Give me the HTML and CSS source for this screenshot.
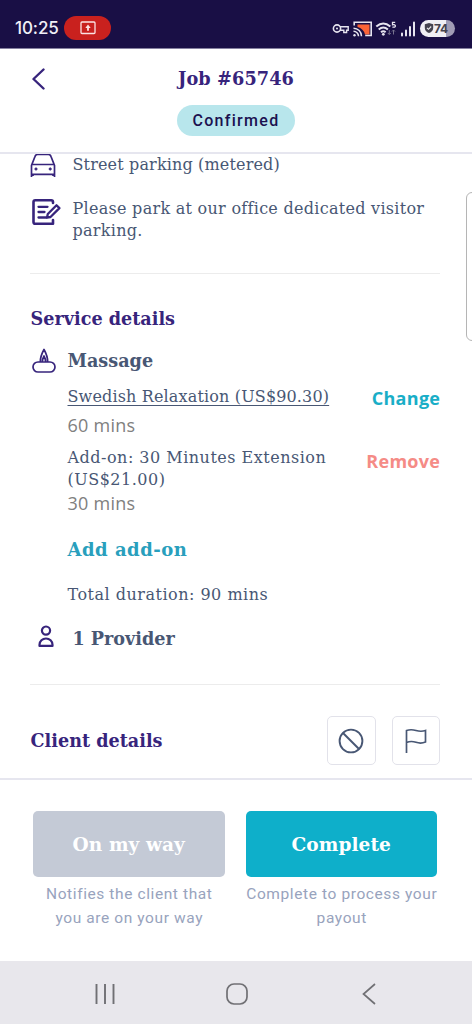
FILE: index.html
```html
<!DOCTYPE html>
<html lang="en">
<head>
<meta charset="utf-8">
<title>Job #65746</title>
<link rel="stylesheet" href="styles.css">
</head>
<body>
<div class="screen">
  <div class="status">
    <span class="clock">10:25</span>
    <span class="record">
      <svg width="16" height="14" viewBox="0 0 16 14" fill="none" stroke="#fbe3e3" stroke-width="1.3"><rect x="1" y="1" width="14" height="11.5" rx="1"/><path d="M8 9.8V6" stroke-width="1.800"/><path d="M8 3.6 10.7 6.9H5.3z" fill="#fbe3e3" stroke="none"/></svg>
    </span>
    <svg class="indicators" width="88" height="24" viewBox="0 0 88 24" fill="none" stroke="#e6e4ef">
      <circle cx="5" cy="12.5" r="3.6" stroke-width="1.6"/><circle cx="5" cy="12.5" r="1" fill="#e6e4ef" stroke="none"/>
      <path d="M8 10.8h8.2v3.4h-1.6v2.3h-2.8v-2.3H8" stroke-width="1.4"/>
      <path d="M25.5 8.500h12v10h-4.500q-1.500-6-7.500-7.500z" fill="#fa6337" stroke="none"/>
      <path d="M22.2 9.500V6.300h17v13.200h-6" stroke-width="1.6"/>
      <path d="M21.5 12.2a8 8 0 0 1 8 8M21.5 15.2a5 5 0 0 1 5 5" stroke-width="1.5"/><circle cx="22.5" cy="19.2" r="1.2" fill="#e6e4ef" stroke="none"/>
      <path d="M44.300 10.500q7-6 14 0M46.700 13.500q4.600-4 9.200 0M49 16.300q2.300-2 4.600 0" stroke-width="2"/><circle cx="51.300" cy="18.300" r="1.400" fill="#e6e4ef" stroke="none"/>
      <path d="M63.200 6.300h-2.700v2.500q2.900-.6 2.900 1.200 0 1.600-3 1.100" stroke-width="1.300"/>
      <path d="M57.300 14v4.500m-1.500-1.500 1.500 1.500 1.500-1.500M61.500 18.500V14m-1.500 1.500L61.500 14l1.500 1.500" stroke="#77738f" stroke-width="1"/>
      <path d="M70 17.500v2M74 14.500v5M78 11v8.500M82 6.500v13" stroke-width="2" stroke-linecap="round"/>
    </svg>
    <span class="battery">
      <svg width="10" height="10" viewBox="0 0 10 10"><path d="M5 0 9.200 1.300V5Q9 8.500 5 10 1 8.500.8 5V1.300z" fill="#45434f"/><path d="m3 4.800 1.500 1.500L7.200 3.500" fill="none" stroke="#eee" stroke-width="1.100"/></svg>
      <span>74</span>
    </span>
  </div>

  <header class="header">
    <svg class="back" width="14" height="24" viewBox="0 0 14 24" fill="none" stroke="#37247c" stroke-width="2.400" stroke-linecap="round" stroke-linejoin="round"><path d="M12.500 2.500 2.500 12l10 9.500"/></svg>
    <h1 class="title">Job #65746</h1>
    <span class="badge">Confirmed</span>
  </header>

  <main class="content">
    <div class="info street">
      <svg width="27" height="25" viewBox="0 0 27 25" fill="none" stroke="#37247c" stroke-width="1.700"><path d="M1.500 24V12.500L4.800 4Q5.500 1.500 7.500 1.500h11q2 0 2.700 2.500L24.500 12.500V24M1.500 11.500h23M1.500 21.300h23M3 20.500V23M23 20.500V23"/><circle cx="6" cy="16" r="1.100" fill="#37247c" stroke-width="1"/><circle cx="20.200" cy="16" r="1.100" fill="#37247c" stroke-width="1"/></svg>
      <p class="body">Street parking (metered)</p>
    </div>
    <div class="info note">
      <svg width="30" height="28" viewBox="0 0 30 28" fill="none" stroke="#37247c" stroke-width="2.600" stroke-linejoin="round" stroke-linecap="round"><path d="M22 5V4q0-1.800-1.800-1.800H4.300Q2.500 2.200 2.500 4v20q0 1.800 1.800 1.800H22V22"/><path d="M7.500 8.800h9M7.500 14h6M7.500 19.500h8" stroke-width="2.300"/><path d="m16 19.500.8-3.500L25.500 7.200l2.900 2.900-8.900 8.900z" stroke-width="2.300"/></svg>
      <p class="body wide">Please park at our office dedicated visitor<br>parking.</p>
    </div>

    <section class="section service">
      <h2 class="heading">Service details</h2>
      <div class="massage">
        <svg width="26" height="27" viewBox="0 0 26 27" fill="none" stroke="#37247c" stroke-width="1.700" stroke-linejoin="round"><rect x="2" y="15" width="22" height="10" rx="5"/><path d="M9.300 15Q9.300 9 13 2.500q3.700 6.500 3.700 12.500M11.300 15q0-3 1.700-6 1.700 3 1.700 6"/></svg>
        <h3 class="subheading">Massage</h3>
      </div>
      <div class="items">
        <div class="item">
          <div>
            <p class="body"><a class="link">Swedish Relaxation (US$90.30)</a></p>
            <p class="mins">60 mins</p>
          </div>
          <a class="action change">Change</a>
        </div>
        <div class="item addon">
          <div>
            <p class="body wider">Add-on: 30 Minutes Extension<br>(US$21.00)</p>
            <p class="mins">30 mins</p>
          </div>
          <a class="action remove">Remove</a>
        </div>
        <a class="add">Add add-on</a>
        <p class="body wider total">Total duration: 90 mins</p>
      </div>
      <div class="provider">
        <svg width="16" height="23" viewBox="0 0 16 23" fill="none" stroke="#37247c" stroke-width="2.200"><circle cx="8" cy="5.600" r="4.100"/><path d="M1.500 20.900v-1.200a6.500 6.200 0 0 1 13 0v1.200z" stroke-linejoin="round"/></svg>
        <h3 class="subheading">1 Provider</h3>
      </div>
    </section>

    <section class="section client">
      <h2 class="heading">Client details</h2>
      <button class="tool"><svg width="26" height="26" viewBox="0 0 26 26" fill="none" stroke="#485774" stroke-width="1.900"><circle cx="13" cy="13" r="11.400"/><path d="m5 5 16 16"/></svg></button>
      <button class="tool"><svg width="24" height="26" viewBox="0 0 24 26" fill="none" stroke="#485774" stroke-width="1.700"><path d="M2.500 25V2.500q4.500-1.500 9.500 0t9.500 0v11.500q-4.500 2-9.500.3t-9.500.2"/></svg></button>
    </section>
  </main>

  <footer class="footer">
    <div class="choice">
      <button class="cta muted">On my way</button>
      <p class="hint">Notifies the client that<br>you are on your way</p>
    </div>
    <div class="choice">
      <button class="cta">Complete</button>
      <p class="hint">Complete to process your<br>payout</p>
    </div>
  </footer>

  <nav class="nav">
    <svg width="22" height="22" viewBox="0 0 22 22" stroke="#707074" stroke-width="1.900"><path d="M2.500 1v20M11 1v20M19.500 1v20"/></svg>
    <svg width="22" height="22" viewBox="0 0 22 22" fill="none" stroke="#707074" stroke-width="1.700"><rect x="1" y="1" width="20" height="20" rx="7"/></svg>
    <svg width="14" height="22" viewBox="0 0 14 22" fill="none" stroke="#707074" stroke-width="1.700"><path d="M13 1 1.500 11 13 21"/></svg>
  </nav>
  <div class="edge"></div>
</div>
</body>
</html>
```
FILE: styles.css
```css
* { box-sizing: border-box; }
body { margin: 0; background: #fff; font-family: "DejaVu Serif", serif; }
h1, h2, h3, p { margin: 0; }
svg { display: block; flex: none; }
button { font-family: inherit; padding: 0; }
.screen { position: relative; width: 472px; height: 1024px; overflow: hidden; display: flex; flex-direction: column; background: #fff; }

.status { height: 49px; flex: none; display: flex; align-items: center; padding: 8px 17px 0 15px; background: #190f45; border-bottom: 1px solid #85809f; }
.clock { width: 49px; font: 500 17px Inter, Roboto, sans-serif; letter-spacing: -.1px; color: #f0eff6; }
.record { width: 47px; height: 24px; border-radius: 12px; background: #c9211e; display: flex; align-items: center; justify-content: center; }
.indicators { margin-left: auto; }
.battery { width: 35px; height: 17px; border-radius: 9px; display: flex; align-items: center; padding-left: 4px; background: linear-gradient(90deg, #f0eff4 74%, #a09cb5 74%); color: #45434f; font: 700 12px Inter, sans-serif; letter-spacing: -.4px; }

.header { height: 105px; flex: none; border-bottom: 2px solid #e6e6ef; position: relative; display: flex; flex-direction: column; align-items: center; padding-top: 17px; }
.back { position: absolute; left: 31px; top: 18px; }
.title { font-size: 17.700px; line-height: 26px; font-weight: 700; letter-spacing: .1px; color: #37247c; }
.badge { width: 118px; height: 31px; margin-top: 13px; border-radius: 16px; background: #b8e6ec; color: #1b1150; font: 500 16px/31px Roboto, sans-serif; letter-spacing: 1.300px; text-align: center; }

.content { height: 624px; flex: none; overflow: hidden; padding: 0 32px 0 30px; }
.body { font-size: 16px; line-height: 21.500px; color: #485774; letter-spacing: .15px; }
.body.wide { letter-spacing: .28px; }
.body.wider { letter-spacing: .5px; }
.info { display: flex; gap: 15px; }
.street { height: 44px; }
.street svg { margin-top: -1px; }
.street .body, .note .body { padding-left: .5px; }
.note { gap: 12px; height: 76px; border-bottom: 1px solid #ececec; }
.note svg { margin: 0 -.5px 0 .5px; }
.service { padding-top: 31px; height: 411px; border-bottom: 1px solid #ececec; }
.heading { font-size: 17.600px; line-height: 28px; font-weight: 700; color: #37247c; padding-left: .6px; }
.massage { display: flex; gap: 10.500px; padding: 14px 0 0 1px; height: 53px; }
.subheading { font-size: 17.600px; line-height: 28px; font-weight: 700; color: #485774; }
.items { margin-left: 37.500px; }
.item { display: flex; justify-content: space-between; height: 61px; }
.item.addon { height: 79px; }
.mins { font: 18px/24px "Open Sans", sans-serif; letter-spacing: .25px; color: #808080; padding-top: 5px; }
.addon .mins { padding-top: 1px; }
.link { text-decoration: underline; text-decoration-thickness: 1px; text-underline-offset: 3px; }
.action { font: 700 18px/24px "Open Sans", sans-serif; letter-spacing: .3px; margin-right: -.3px; }
.change { color: #19aec7; }
.remove { color: #f58b86; padding-top: 2px; }
.add { display: block; margin-top: 11px; font-size: 18px; line-height: 26px; font-weight: 700; letter-spacing: .5px; color: #299fbd; }
.total { margin-top: 21px; }
.provider { display: flex; gap: 18.500px; padding: 19px 0 0 8px; }
.provider svg { margin-top: 0; }
.client { display: flex; align-items: center; padding-top: 31px; gap: 16px; }
.client .heading { margin-right: auto; }
.tool { width: 48.500px; height: 49px; border: 1.500px solid #e2e2ea; border-radius: 5px; background: #fff; display: flex; align-items: center; justify-content: center; }

.footer { height: 183px; flex: none; border-top: 2px solid #e6e6ef; padding: 31px 35px 0 33px; display: flex; gap: 21px; }
.choice { flex: 1; text-align: center; }
.cta { width: 100%; height: 66px; border: 0; border-radius: 5px; background: #0eafca; color: #fff; font-size: 18.500px; font-weight: 700; letter-spacing: .1px; display: block; }
.cta.muted { background: #c4cad6; }
.hint { margin: 6px -8px 0 -7px; font: 15.500px/23.500px Roboto, sans-serif; letter-spacing: .6px; color: #98a3bd; }

.nav { height: 63px; flex: none; background: #e8e7ec; display: flex; align-items: center; padding: 2px 0 0 94px; gap: 110px; }
.nav svg:last-child { margin-left: 4px; }
.edge { position: absolute; left: 466px; top: 192px; width: 12px; height: 149px; border: 1.500px solid #b5b5b5; border-radius: 6px; background: #fff; }
```
